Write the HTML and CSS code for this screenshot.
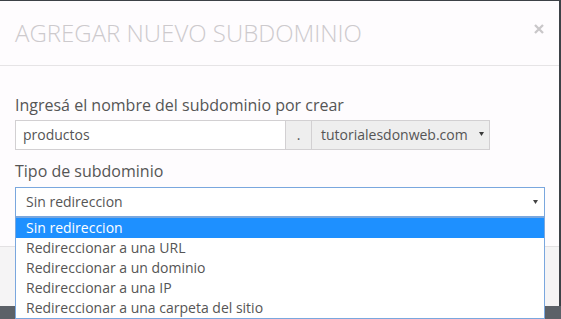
FILE: index.html
```html
<!DOCTYPE html>
<html lang="es">
<head>
<meta charset="utf-8">
<title>Agregar nuevo subdominio</title>
<link rel="stylesheet" href="styles.css">
</head>
<body>
<div class="stage">
  <div class="modal">
    <div class="modal-header">
      <h4 class="modal-title">AGREGAR NUEVO SUBDOMINIO</h4>
      <span class="close" aria-label="Cerrar">
        <svg width="10" height="10" viewBox="0 0 10 10"><path d="M1 1 L9 9 M9 1 L1 9" stroke="#c9c7c9" stroke-width="2.3" stroke-linecap="butt"/></svg>
      </span>
    </div>
    <div class="modal-body">
      <div class="form-group">
        <label class="label">Ingresá el nombre del subdominio por crear</label>
        <div class="input-group">
          <div class="input">productos</div>
          <div class="addon">.</div>
          <div class="domain-select">
            <span>tutorialesdonweb.com</span>
            <svg class="caret" width="5" height="4" viewBox="0 0 5 4"><path d="M0 0 H5 L2.5 4 Z" fill="#3a3a3a"/></svg>
          </div>
        </div>
      </div>
      <div class="form-group">
        <label class="label">Tipo de subdominio</label>
        <div class="select-wrap">
          <div class="select">
            <span>Sin redireccion</span>
            <svg class="caret" width="5" height="4" viewBox="0 0 5 4"><path d="M0 0 H5 L2.5 4 Z" fill="#444"/></svg>
          </div>
          <ul class="options">
            <li class="option active">Sin redireccion</li>
            <li class="option">Redireccionar a una URL</li>
            <li class="option">Redireccionar a un dominio</li>
            <li class="option">Redireccionar a una IP</li>
            <li class="option">Redireccionar a una carpeta del sitio</li>
          </ul>
        </div>
      </div>
    </div>
    <div class="modal-footer"></div>
  </div>
  <div class="page-strip"></div>
</div>
</body>
</html>
```

FILE: styles.css
```css
html, body {
  margin: 0;
  padding: 0;
}

body {
  width: 561px;
  height: 319px;
  overflow: hidden;
  background: #3d4147;
  font-family: "Open Sans", "Liberation Sans", sans-serif;
  color: #555;
}

.stage {
  padding-top: 1px;
}

.modal {
  width: 559px;
  background: #fefcfe;
}

.modal-header {
  display: flex;
  justify-content: space-between;
  align-items: flex-start;
  padding: 15px 15px 15px 15px;
  border-bottom: 1px solid #e6e4e6;
}

.modal-title {
  margin: 0;
  font-size: 24px;
  font-weight: 300;
  line-height: 34px;
  color: #cdcacd;
}

.close {
  display: block;
  width: 10px;
  height: 10px;
  margin-top: 8px;
}

.close svg {
  display: block;
}

.modal-body {
  padding: 28px 14px 29px 15px;
}

.form-group + .form-group {
  margin-top: 10px;
}

.label {
  display: block;
  font-size: 16px;
  line-height: 23px;
  color: #555;
  margin-bottom: 3px;
}

.form-group + .form-group .label {
  margin-bottom: 4px;
}

.input-group {
  display: flex;
  height: 30px;
  font-size: 14px;
  line-height: 28px;
}

.input {
  box-sizing: border-box;
  width: 271px;
  height: 30px;
  border: 1px solid #d2d0d2;
  background: #fff;
  padding-left: 7px;
  color: #555;
}

.addon {
  box-sizing: border-box;
  width: 27px;
  height: 30px;
  margin-left: -1px;
  border: 1px solid #d2d0d2;
  background: #eee;
  text-align: center;
  color: #555;
}

.domain-select {
  box-sizing: border-box;
  width: 179px;
  height: 30px;
  margin-left: -1px;
  border: 1px solid #d2d0d2;
  background: #eee;
  padding: 0 5px 0 9px;
  display: flex;
  justify-content: space-between;
  align-items: center;
  color: #555;
}

.domain-select .caret {
  margin-top: -3px;
}

.select-wrap {
  position: relative;
}

.select {
  box-sizing: border-box;
  height: 30px;
  border: 1px solid #7aa7de;
  background: #fff;
  padding: 0 6px 0 10px;
  display: flex;
  justify-content: space-between;
  align-items: center;
  font-size: 14px;
  line-height: 28px;
  color: #555;
}

.select .caret {
  margin-top: -1px;
}

.options {
  position: absolute;
  top: 100%;
  left: 0;
  right: 0;
  margin: 0;
  padding: 0;
  list-style: none;
  background: #fff;
  border: 1px solid #7aa7de;
  border-top: 1px solid #7aa7de;
  z-index: 10;
}

.option {
  height: 20px;
  line-height: 20px;
  font-size: 14px;
  padding-left: 10px;
  color: #555;
  white-space: nowrap;
}

.option.active {
  background: #1e90ff;
  color: #fff;
}

.modal-footer {
  height: 59px;
  border-top: 1px solid #e3e1e3;
  background: #f5f4f5;
}

.page-strip {
  height: 14px;
  width: 561px;
  background: #5c6168;
}
```
